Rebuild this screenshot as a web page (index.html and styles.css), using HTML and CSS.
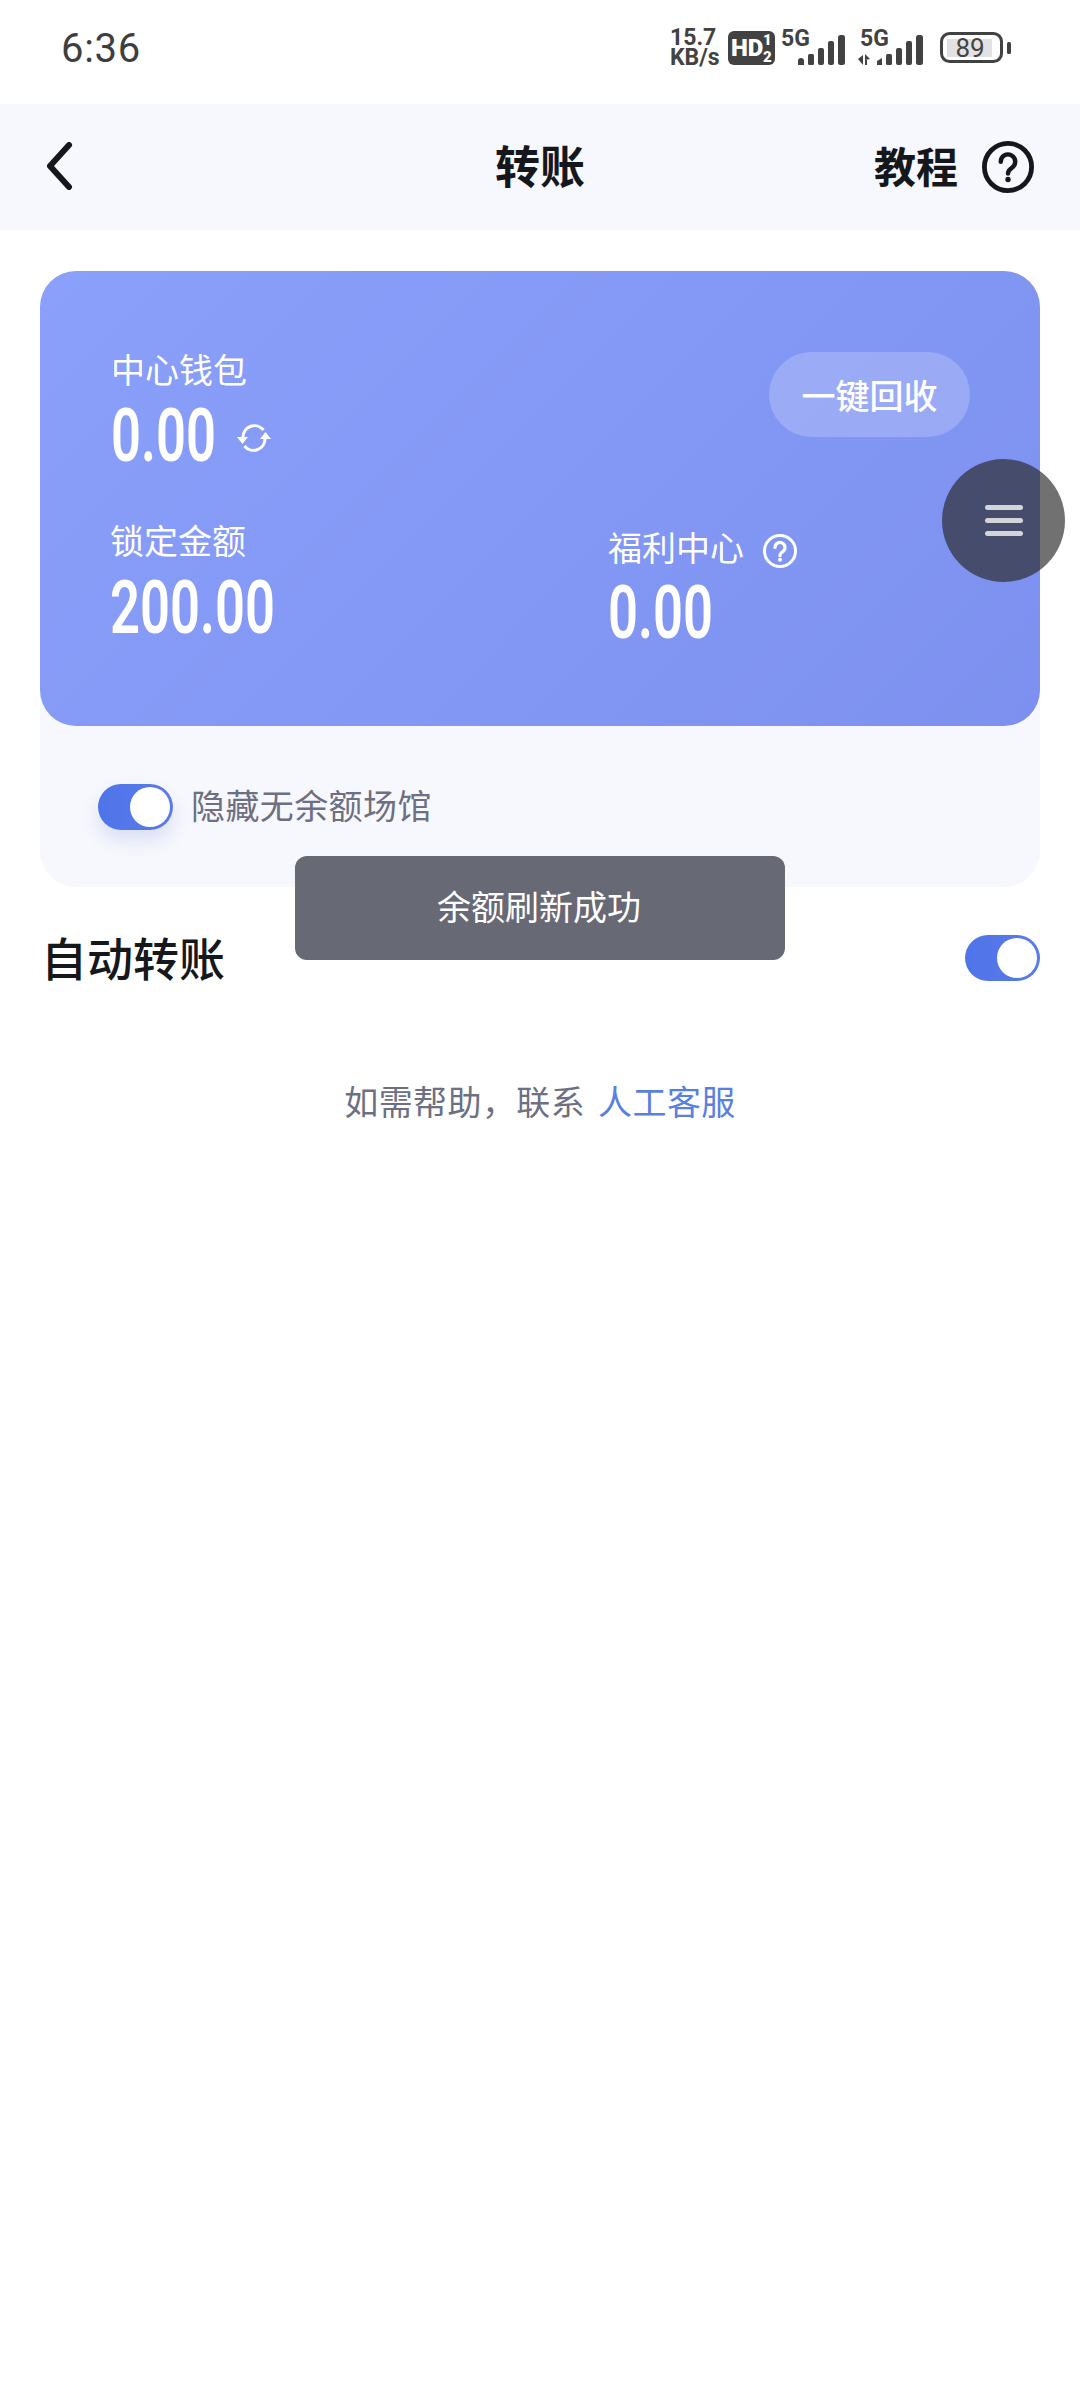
FILE: index.html
```html
<!DOCTYPE html>
<html lang="zh-CN">
<head>
<meta charset="utf-8">
<title>转账</title>
<link rel="stylesheet" href="styles.css">
</head>
<body>
<div class="page">
  <div class="status">
    <span class="time">6:36</span>
    <div class="status-right">
      <span class="speed">15.7<br>KB/s</span>
      <svg class="hd" width="47" height="34" viewBox="0 0 47 34">
        <rect width="47" height="34" rx="6" fill="#424242"/>
        <text x="3" y="25" class="hd-t">HD</text>
        <text x="35" y="14" class="hd-s">1</text>
        <text x="35" y="31" class="hd-s">2</text>
      </svg>
      <svg class="sig1" width="65" height="42" viewBox="0 -6 65 42">
        <text x="0" y="16" class="g5">5G</text>
        <g fill="#424242">
          <path d="M17 35v-4a3 3 0 0 1 6 0v4z"/>
          <rect x="27" y="24" width="6" height="11" rx="1.5"/>
          <rect x="37" y="18" width="6" height="17" rx="2"/>
          <rect x="47" y="11" width="6" height="24" rx="2"/>
          <rect x="57" y="5" width="7" height="30" rx="2.5"/>
        </g>
      </svg>
      <svg class="sig2" width="68" height="42" viewBox="0 -6 68 42">
        <text x="2" y="16" class="g5">5G</text>
        <g fill="#424242">
          <path d="M0 29l5-4v10z"/>
          <path d="M7 24l5 5-5 1z"/>
          <path d="M7 30h2v5H7z"/>
          <path d="M19 35v-4l5-3v7z"/>
          <rect x="28" y="24" width="6" height="11" rx="1.5"/>
          <rect x="38" y="18" width="6" height="17" rx="2"/>
          <rect x="48" y="11" width="6" height="24" rx="2"/>
          <rect x="58" y="5" width="7" height="30" rx="2.5"/>
        </g>
      </svg>
      <svg class="batt" width="71" height="32" viewBox="0 0 71 32">
        <rect x="1.5" y="1.5" width="60" height="28" rx="8" fill="none" stroke="#424242" stroke-width="3"/>
        <rect x="7" y="7" width="45" height="18" fill="#e2e2e2"/>
        <rect x="67" y="10" width="4" height="12" rx="1.5" fill="#424242"/>
        <text x="30" y="25" text-anchor="middle" class="batt-t">89</text>
      </svg>
    </div>
  </div>

  <header class="nav">
    <svg class="back" width="28" height="48" viewBox="0 0 28 48"><path d="M24 3 5 24l19 21" fill="none" stroke="#16171b" stroke-width="6" stroke-linecap="round" stroke-linejoin="round"/></svg>
    <h1 class="title">转账</h1>
    <div class="nav-right">
      <span class="tutorial">教程</span>
      <svg width="52" height="52" viewBox="0 0 54 54">
        <circle cx="27" cy="27" r="24.5" fill="none" stroke="#16171b" stroke-width="5"/>
        <path d="M19.500 21.500a7.500 7.500 0 1 1 11.500 6.300c-2.800 1.800-4 3-4 6" fill="none" stroke="#16171b" stroke-width="4.600" stroke-linecap="round"/>
        <circle cx="27" cy="40" r="2.800" fill="#16171b"/>
      </svg>
    </div>
  </header>

  <section class="panel">
    <div class="card">
      <div class="card-top">
        <div>
          <div class="label">中心钱包</div>
          <div class="value-row">
            <span class="value value-short">0.00</span>
            <svg class="refresh" width="34" height="28" viewBox="0 0 34 28">
              <g fill="none" stroke="#fff" stroke-width="3">
                <path d="M6 13A11.500 11.500 0 0 1 26.500 6"/>
                <path d="M28 15A11.500 11.500 0 0 1 7.500 22"/>
              </g>
              <path d="M0 13h11l-5.500 7zM23 15h11l-5.500-7z" fill="#fff"/>
            </svg>
          </div>
        </div>
        <button class="collect">一键回收</button>
      </div>
      <div class="card-bottom">
        <div class="locked">
          <div class="label">锁定金额</div>
          <div class="value value-low">200.00</div>
        </div>
        <div class="welfare">
          <div class="label label-row">福利中心
            <svg class="tip" width="36" height="36" viewBox="0 0 36 36">
              <circle cx="18" cy="18" r="15.500" fill="none" stroke="#fff" stroke-width="3"/>
              <path d="M13 14.500a5 5 0 1 1 7.700 4.200c-1.800 1.200-2.700 2-2.700 4" fill="none" stroke="#fff" stroke-width="3.200" stroke-linecap="round"/>
              <circle cx="18" cy="26.800" r="2" fill="#fff"/>
            </svg>
          </div>
          <div class="value value-tight">0.00</div>
        </div>
      </div>
    </div>
    <div class="hide-row">
      <span class="switch switch-shadow"><span class="knob"></span></span>
      <span class="hide-text">隐藏无余额场馆</span>
    </div>
  </section>

  <div class="auto-row">
    <span class="auto-title">自动转账</span>
    <span class="switch"><span class="knob"></span></span>
  </div>

  <p class="help">如需帮助，联系 <a class="link">人工客服</a></p>

  <div class="toast"><span class="toast-text">余额刷新成功</span></div>
  <div class="fab">
    <span class="fab-line"></span><span class="fab-line"></span><span class="fab-line"></span>
  </div>
</div>
</body>
</html>
```

FILE: styles.css
```css
* { box-sizing: border-box; }
html, body { margin: 0; padding: 0; background: #fff; }
body { font-family: "Inter", "Noto Sans CJK SC", sans-serif; }
.page { position: relative; width: 1080px; height: 2400px; overflow: hidden; }

.status { height: 104px; display: flex; align-items: center; justify-content: space-between; padding: 0 69px 0 61px; }
.time { font-family: "Roboto", sans-serif; font-size: 40px; color: #3e3e3e; letter-spacing: .7px; margin-top: -8px; }
.status-right { display: flex; align-items: center; margin-top: -9px; }
.speed { font-family: "Roboto", sans-serif; font-weight: 700; font-size: 23px; line-height: 20px; color: #424242; width: 58px; white-space: nowrap; }
.hd { margin-right: 6px; }
.hd-t { font-family: "Roboto", sans-serif; font-weight: 900; font-size: 24px; fill: #fff; }
.hd-s { font-family: "Roboto", sans-serif; font-weight: 900; font-size: 15px; fill: #fff; }
.sig1, .sig2 { margin-top: -6px; }
.g5 { font-family: "Roboto", sans-serif; font-weight: 700; font-size: 23px; fill: #424242; }
.sig2 { margin-left: 12px; }
.batt { margin-left: 14px; }
.batt-t { font-family: "Roboto", sans-serif; font-size: 26px; fill: #444; }

.nav { height: 126px; background: #f7f8fd; display: flex; align-items: center; justify-content: space-between; padding: 0 46px 0 45px; position: relative; }
.back { display: block; margin-top: -2px; }
.title { position: absolute; left: 0; right: 0; margin: -4px 0 0; text-align: center; font-family: "Noto Sans CJK SC", sans-serif; font-size: 45px; font-weight: 700; color: #16171b; line-height: 60px; }
.nav-right { display: flex; align-items: center; gap: 24px; }
.tutorial { font-family: "Noto Sans CJK SC", sans-serif; font-size: 42px; font-weight: 700; color: #16171b; line-height: 60px; margin-top: -5px; }
.nav-right svg { margin-top: -1px; }

.panel { margin: 41px 40px 0; height: 616px; border-radius: 36px; background: #f7f8fd; }
.card { height: 455px; border-radius: 36px; background: linear-gradient(135deg, #8aa0fa 0%, #7d90ef 100%); padding: 78px 70px 0 71px; color: #fff; }
.card-top { display: flex; justify-content: space-between; align-items: flex-start; }
.label { font-family: "Noto Sans CJK SC", sans-serif; font-size: 34px; line-height: 40px; color: #fff; }
.label-row { display: flex; align-items: center; gap: 18px; }
.tip { margin-top: 8px; }
.value { font-family: "Roboto", sans-serif; font-weight: 600; font-size: 75px; line-height: 60px; margin-top: 16px; color: #fff; transform: scaleX(.7); transform-origin: left center; white-space: nowrap; }
.value-low { margin-top: 17px; }
.value-tight { margin-top: 13px; }
.value-row { display: flex; align-items: center; }
.value-short { width: 126px; }
.refresh { margin-top: 22px; }
.collect { margin: 3px 0 0; width: 201px; height: 85px; border: 0; border-radius: 43px; background: rgba(255,255,255,.2); color: #fff; font-family: "Noto Sans CJK SC", sans-serif; font-size: 34px; font-weight: 500; padding: 0; }
.card-bottom { display: grid; grid-template-columns: 497px 1fr; margin-top: 55px; }
.locked { margin-left: -1px; }
.welfare { padding-top: 5px; }

.hide-row { display: flex; align-items: center; gap: 18px; padding: 58px 0 0 58px; }
.hide-text { font-family: "Noto Sans CJK SC", sans-serif; font-size: 34px; letter-spacing: .4px; line-height: 46px; color: #6d6f82; margin-top: -5px; }

.switch { display: inline-flex; align-items: center; justify-content: flex-end; width: 75px; height: 46px; border-radius: 23px; background: linear-gradient(90deg, #4f74ea, #5a7ce8); padding: 3px; }
.switch-shadow { box-shadow: 0 10px 18px rgba(90,110,200,.18); }
.knob { width: 40px; height: 40px; border-radius: 50%; background: #fff; }

.auto-row { display: flex; align-items: center; justify-content: space-between; padding: 0 40px 0 41px; margin-top: 48px; height: 46px; }
.auto-title { font-family: "Noto Sans CJK SC", sans-serif; font-size: 46px; font-weight: 500; color: #16171b; line-height: 60px; margin-top: -5px; }

.help { margin: 97px 0 0; text-align: center; font-family: "Noto Sans CJK SC", sans-serif; font-size: 34px; letter-spacing: .4px; line-height: 46px; color: #6d6f82; }
.link { color: #5b7fdf; margin-left: 5px; }

.toast { position: absolute; left: 295px; top: 856px; width: 490px; height: 104px; border-radius: 12px; background: #676a75; color: #fff; display: flex; align-items: center; justify-content: center; font-family: "Noto Sans CJK SC", sans-serif; font-size: 34px; }
.toast-text { margin: -5px 2px 0 0; }
.fab { position: absolute; left: 942px; top: 459px; width: 123px; height: 123px; border-radius: 50%; background: rgba(39,39,39,.66); display: flex; flex-direction: column; align-items: center; justify-content: center; gap: 8px; }
.fab-line { width: 38px; height: 5px; border-radius: 3px; background: #d4d5d8; }
```
